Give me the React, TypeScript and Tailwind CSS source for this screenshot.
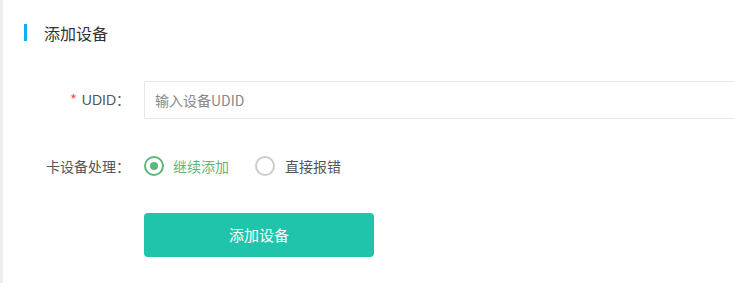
export default function App() {
  return (
    <div
      className="flex h-[283px] w-[734px] overflow-hidden bg-white"
      style={{ fontFamily: '"Noto Sans CJK SC", "Noto Sans", sans-serif' }}
    >
      <div className="w-[3px] shrink-0 bg-[#ededed]" />
      <div className="flex-1 pl-[21px] pt-[24px]">
        <div className="flex h-[17px] items-center">
          <div className="h-[17px] w-[3px] bg-[#0cb4ec]" />
          <span className="ml-[17px] text-[16px] leading-none text-[#333]">添加设备</span>
        </div>

        <div className="mt-[40px] flex items-center">
          <label className="w-[106px] text-right text-[14px] text-[#555]">
            <span className="mr-[5px] text-[#f44]">*</span>
            <span className="font-['Liberation_Sans']">UDID</span>：
          </label>
          <input
            className="ml-[14px] h-[38px] w-[600px] border border-[#e8e8e8] px-[10px] text-[14px] text-[#333] outline-none placeholder:text-[#888]"
            placeholder="输入设备UDID"
          />
        </div>

        <div className="mt-[28px] flex h-[38px] items-center">
          <label className="w-[106px] text-right text-[14px] text-[#555]">卡设备处理：</label>
          <div className="ml-[14px] flex items-center">
            <span className="flex h-[20px] w-[20px] items-center justify-center rounded-full border-2 border-[#5cb87a]">
              <span className="h-[8px] w-[8px] rounded-full bg-[#5cb87a]" />
            </span>
            <span className="ml-[9px] text-[14px] text-[#5cb87a]">继续添加</span>
            <span className="ml-[26px] h-[20px] w-[20px] rounded-full border-2 border-[#ccc]" />
            <span className="ml-[10px] text-[14px] text-[#555]">直接报错</span>
          </div>
        </div>

        <div className="mt-[28px] flex">
          <button className="ml-[120px] h-[44px] w-[230px] rounded-[4px] bg-[#20c4ab] text-[15px] text-white">
            添加设备
          </button>
        </div>
      </div>
    </div>
  );
}
